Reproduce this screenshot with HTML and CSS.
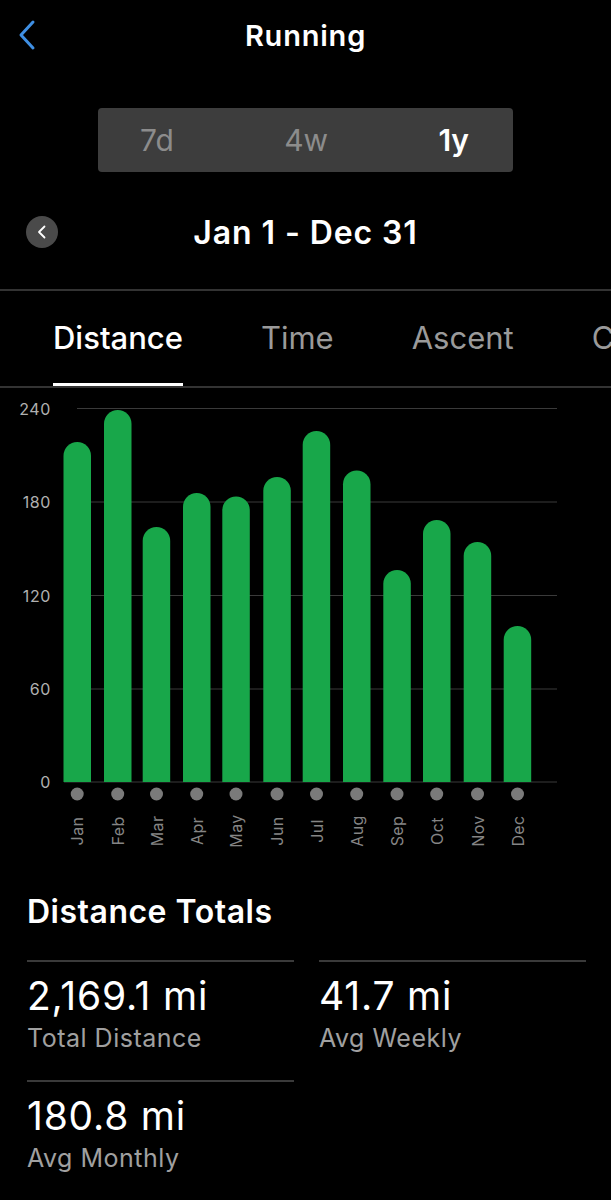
FILE: index.html
```html
<!DOCTYPE html>
<html lang="en">
<head>
    <meta charset="UTF-8">
    <title>Running</title>
    <link rel="stylesheet" href="styles.css">
</head>
<body>
<div class="nav-bar">
    <svg class="back-btn" width="20" height="32" viewBox="0 0 20 32">
        <polyline points="15,3 3,16 15,29" fill="none" stroke="#3f8fe3" stroke-width="3" stroke-linecap="round" stroke-linejoin="round"/>
    </svg>
    <div class="nav-title">Running</div>
</div>

<div class="range-picker">
    <span class="range-item">7d</span>
    <span class="range-item">4w</span>
    <span class="range-item selected">1y</span>
</div>

<div class="date-row">
    <div class="date-prev">
        <svg width="32" height="32" viewBox="0 0 32 32">
            <circle cx="16" cy="16" r="16" fill="#4a4a4a"/>
            <polyline points="18.5,10.5 13,16 18.5,21.5" fill="none" stroke="#fff" stroke-width="1.8" stroke-linecap="round" stroke-linejoin="round"/>
        </svg>
    </div>
    <div class="date-label">Jan 1 - Dec 31</div>
    <div></div>
</div>

<div class="metric-tabs">
    <span class="metric-tab active">Distance</span>
    <span class="metric-tab">Time</span>
    <span class="metric-tab">Ascent</span>
    <span class="metric-tab">Calories</span>
</div>

<!-- Monthly distance chart -->
<svg class="chart" width="611" height="470" viewBox="0 0 611 470">
    <defs>
        <clipPath id="plot"><rect x="0" y="0" width="611" height="392"/></clipPath>
    </defs>
    <g class="grid">
        <line x1="77" y1="18.5" x2="557" y2="18.5"/>
        <line x1="77" y1="112" x2="557" y2="112"/>
        <line x1="77" y1="205.5" x2="557" y2="205.5"/>
        <line x1="77" y1="299" x2="557" y2="299"/>
        <line x1="64" y1="392" x2="557" y2="392"/>
    </g>
    <g class="axis-y">
        <text x="51" y="18.5">240</text>
        <text x="51" y="112">180</text>
        <text x="51" y="205.5">120</text>
        <text x="51" y="299">60</text>
        <text x="51" y="392">0</text>
    </g>
    <g class="bars" clip-path="url(#plot)">
        <rect x="63.5" y="52" width="27.5" height="354" rx="13.75"/>
        <rect x="104" y="20" width="27.5" height="386" rx="13.75"/>
        <rect x="142.7" y="137" width="27.5" height="269" rx="13.75"/>
        <rect x="183" y="103" width="27.5" height="303" rx="13.75"/>
        <rect x="222.3" y="106.5" width="27.5" height="300" rx="13.75"/>
        <rect x="263.3" y="87" width="27.5" height="319" rx="13.75"/>
        <rect x="302.7" y="41" width="27.5" height="365" rx="13.75"/>
        <rect x="343" y="80.5" width="27.5" height="326" rx="13.75"/>
        <rect x="383.3" y="180" width="27.5" height="226" rx="13.75"/>
        <rect x="423" y="130" width="27.5" height="276" rx="13.75"/>
        <rect x="463.7" y="152" width="27.5" height="254" rx="13.75"/>
        <rect x="503.7" y="236" width="27.5" height="170" rx="13.75"/>
    </g>
    <g class="dots">
        <circle cx="77.2" cy="404" r="6.5"/>
        <circle cx="117.7" cy="404" r="6.5"/>
        <circle cx="156.5" cy="404" r="6.5"/>
        <circle cx="196.7" cy="404" r="6.5"/>
        <circle cx="236" cy="404" r="6.5"/>
        <circle cx="277" cy="404" r="6.5"/>
        <circle cx="316.5" cy="404" r="6.5"/>
        <circle cx="356.7" cy="404" r="6.5"/>
        <circle cx="397" cy="404" r="6.5"/>
        <circle cx="436.7" cy="404" r="6.5"/>
        <circle cx="477.5" cy="404" r="6.5"/>
        <circle cx="517.5" cy="404" r="6.5"/>
    </g>
    <g class="axis-x">
        <text transform="translate(77.2 441) rotate(-90)">Jan</text>
        <text transform="translate(117.7 441) rotate(-90)">Feb</text>
        <text transform="translate(156.5 441) rotate(-90)">Mar</text>
        <text transform="translate(196.7 441) rotate(-90)">Apr</text>
        <text transform="translate(236 441) rotate(-90)">May</text>
        <text transform="translate(277 441) rotate(-90)">Jun</text>
        <text transform="translate(316.5 441) rotate(-90)">Jul</text>
        <text transform="translate(356.7 441) rotate(-90)">Aug</text>
        <text transform="translate(397 441) rotate(-90)">Sep</text>
        <text transform="translate(436.7 441) rotate(-90)">Oct</text>
        <text transform="translate(477.5 441) rotate(-90)">Nov</text>
        <text transform="translate(517.5 441) rotate(-90)">Dec</text>
    </g>
</svg>

<div class="totals">
    <div class="totals-title">Distance Totals</div>
    <div class="totals-grid">
        <div class="stat">
            <div class="stat-value">2,169.1 mi</div>
            <div class="stat-label">Total Distance</div>
        </div>
        <div class="stat">
            <div class="stat-value">41.7 mi</div>
            <div class="stat-label">Avg Weekly</div>
        </div>
        <div class="stat">
            <div class="stat-value">180.8 mi</div>
            <div class="stat-label">Avg Monthly</div>
        </div>
    </div>
</div>
</body>
</html>
```

FILE: styles.css
```css
body {
    margin: 0;
    background-color: #000;
    color: #fff;
    font-family: Inter, Roboto, "Liberation Sans", sans-serif;
    width: 611px;
    overflow: hidden;
}

/* Top bar */
.nav-bar {
    display: grid;
    grid-template-columns: 1fr auto 1fr;
    align-items: center;
    height: 70px;
}
.back-btn {
    margin-left: 18px;
    display: block;
}
.nav-title {
    font-size: 29px;
    font-weight: 600;
    letter-spacing: 0.8px;
}

/* 7d / 4w / 1y switch */
.range-picker {
    display: flex;
    justify-content: space-between;
    align-items: center;
    box-sizing: border-box;
    width: 415px;
    height: 64px;
    margin: 38px 0 0 98px;
    padding: 0 44px 0 42px;
    background-color: #3d3d3d;
    border-radius: 4px;
}
.range-item {
    font-size: 30px;
    color: #8c8c8c;
}
.range-item.selected {
    color: #fff;
    font-weight: 600;
}

/* Date range row */
.date-row {
    display: grid;
    grid-template-columns: 1fr auto 1fr;
    align-items: center;
    height: 48px;
    margin-top: 36px;
    border-bottom: 2px solid #333;
    padding-bottom: 33px;
}
.date-prev {
    padding-left: 26px;
}
.date-prev svg {
    display: block;
}
.date-label {
    font-size: 32px;
    font-weight: 600;
    letter-spacing: 0.9px;
}

/* Metric tabs */
.metric-tabs {
    display: flex;
    gap: 78px;
    padding-left: 53px;
    white-space: nowrap;
    overflow: hidden;
    border-bottom: 2px solid #333;
}
.metric-tab {
    font-size: 31px;
    line-height: 36px;
    padding: 29px 0 27px;
    color: #9a9a9a;
    border-bottom: 3px solid transparent;
}
.metric-tab.active {
    color: #fff;
    font-weight: 500;
    border-bottom-color: #fff;
}

/* Chart */
.chart {
    display: block;
    margin-top: 2px;
}
.grid line {
    stroke: #3a3a3a;
    stroke-width: 1.2;
}
.axis-y text {
    fill: #b0b0b0;
    font-size: 16px;
    letter-spacing: 0.6px;
    text-anchor: end;
    dominant-baseline: central;
}
.bars rect {
    fill: #18a74a;
}
.dots circle {
    fill: #7a7a7a;
}
.axis-x text {
    fill: #858585;
    font-size: 16px;
    letter-spacing: 0.4px;
    text-anchor: middle;
    dominant-baseline: central;
}

/* Totals */
.totals {
    margin-top: 34px;
    padding: 0 25px 0 27px;
}
.totals-title {
    font-size: 32px;
    line-height: 36px;
    font-weight: 600;
    letter-spacing: 0.5px;
    margin-bottom: 30px;
}
.totals-grid {
    display: grid;
    grid-template-columns: 1fr 1fr;
    column-gap: 25px;
    row-gap: 25px;
}
.stat {
    border-top: 2px solid #3a3a3a;
    padding-top: 12px;
}
.stat-value {
    font-size: 39px;
    line-height: 44px;
    letter-spacing: 0.8px;
}
.stat-label {
    font-size: 25px;
    line-height: 34px;
    letter-spacing: 0.5px;
    margin-top: 3px;
    color: #a0a0a0;
}
```
